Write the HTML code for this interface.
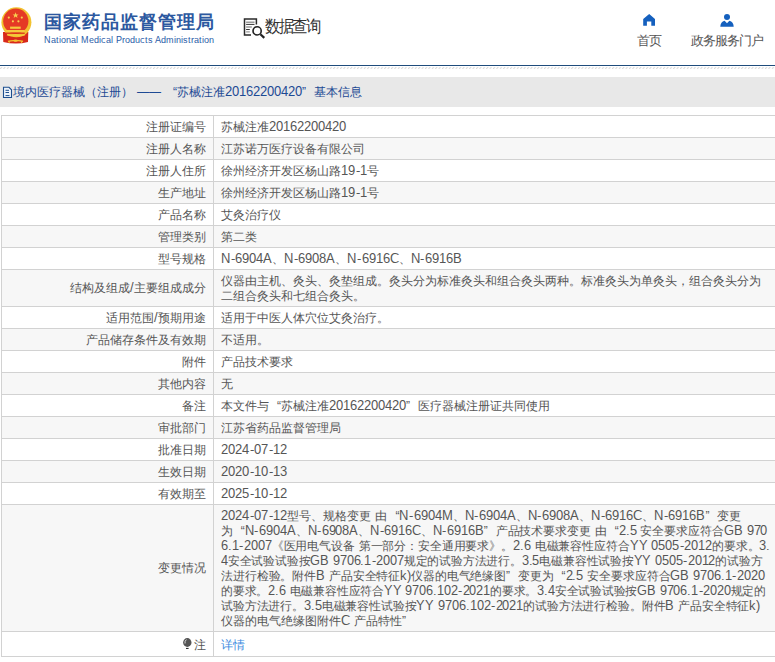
<!DOCTYPE html>
<html><head><meta charset="utf-8">
<style>
@font-face{font-family:"Liberation Sans";src:local("Liberation Sans"),local("LiberationSans");size-adjust:108%;unicode-range:U+0020-007E,U+00A0-00FF}
*{margin:0;padding:0;box-sizing:border-box}
html,body{width:775px;height:662px;overflow:hidden;background:#fff;font-family:"Liberation Sans",sans-serif;-webkit-font-smoothing:antialiased}
.abs{position:absolute}
.t1{position:absolute;left:44px;top:8.5px;font-size:18px;letter-spacing:1px;font-weight:bold;color:#2c58a0;white-space:nowrap;line-height:24px}
.t2{position:absolute;left:44px;top:35px;font-size:8.6px;color:#2a5ca8;white-space:nowrap;line-height:11px}
.dqt{position:absolute;left:265px;top:16px;font-size:15px;letter-spacing:-1.3px;transform:scaleY(1.1);transform-origin:0 17px;color:#333;white-space:nowrap;line-height:20px}
.nav{position:absolute;top:32.5px;font-size:13px;letter-spacing:-1px;color:#555;white-space:nowrap;line-height:14px}
.bline{position:absolute;left:0;top:65px;width:775px;height:1px;background:#1f4c7c}
.hatch{position:absolute;left:0;top:67px;width:775px;height:2px}
.band{position:absolute;left:0;top:77px;width:775px;height:30px;background:#e8e8e8}
.bt{position:absolute;left:13px;top:84px;font-size:12px;color:#1d4a94;white-space:nowrap;line-height:16px}
.tbl{position:absolute;left:1px;top:115px;width:800px;border-collapse:collapse;font-size:12px;color:#555}
.tbl td{border:1px solid #d2d2d2;line-height:15px;padding:3px 7px;vertical-align:middle;white-space:nowrap}
.tbl td.l{width:212px;text-align:right}
.tbl tr:nth-child(even) td{background:#f7f7f7}
.qo{display:inline-block;width:12px;text-align:right}
.qc{display:inline-block;width:12px;text-align:left}
.la{letter-spacing:0px}.hy{letter-spacing:0.6px;padding-left:0.6px}
</style></head><body>
<svg class="abs" style="left:0;top:0" width="40" height="50" viewBox="0 0 40 50">
  <path d="M3 32 L28.3 32 L28 42 Q16 45 3.3 42Z" fill="#d8281b"/>
  <circle cx="16.4" cy="22.3" r="15" fill="#f2c230"/>
  <circle cx="15.8" cy="21.2" r="12.6" fill="#e53a25"/>
  <rect x="10.1" y="26.6" width="10.6" height="2.2" fill="#f6c93e"/>
  <rect x="5.7" y="30" width="19" height="2.6" fill="#f6c93e"/>
  <path d="M5.7 33.2 H24.7" stroke="#d8281b" stroke-width="1.2"/>
  <path d="M7 34.6 Q11 36.5 15.5 34.6 Q20 36.5 25 34.6" stroke="#f6c93e" stroke-width="1.3" fill="none"/>
  <polygon points="15.6,12.3 16.4,14.4 18.6,14.4 16.9,15.7 17.5,17.9 15.6,16.6 13.7,17.9 14.3,15.7 12.6,14.4 14.8,14.4" fill="#f7d050"/>
  <circle cx="8.8" cy="17.6" r="1.1" fill="#f7d050"/><circle cx="21.8" cy="17.6" r="1.1" fill="#f7d050"/>
  <circle cx="12.9" cy="21.3" r="1.1" fill="#f7d050"/><circle cx="18.4" cy="21.3" r="1.1" fill="#f7d050"/>
  <path d="M8 41.5 Q12 40.2 15.6 40.8 Q19.5 40.2 23 41.5" stroke="#f2c230" stroke-width="1.4" fill="none"/>
  <ellipse cx="15.6" cy="40.6" rx="2.2" ry="1.2" fill="#f2c230"/>
  <path d="M9.2 41.5 V43 M21.5 41.5 V43" stroke="#f2c230" stroke-width="0.9"/>
</svg>
<div class="t1">国家药品监督管理局</div>
<div class="t2">National Medical Products Administration</div>
<svg class="abs" style="left:243px;top:17px" width="24" height="23" viewBox="0 0 24 23">
  <path d="M1.5 8 V17.9 H8 M1.5 8 V1.9 H13.4 V7.6" stroke="#2a2a2a" stroke-width="1.5" fill="none"/>
  <path d="M3.1 5.2h8.4M3.1 10h5.7M3.1 14.9h3.7" stroke="#9a9a9a" stroke-width="1.4"/>
  <path d="M3.1 7.4h8.4M3.1 12.5h3.7" stroke="#333" stroke-width="1"/>
  <circle cx="14.1" cy="13.9" r="4.1" stroke="#222" stroke-width="1.6" fill="#fff"/>
  <path d="M17.4 17.3 L21.3 20.9" stroke="#222" stroke-width="2.2"/>
</svg>
<div class="dqt">数据查询</div>
<svg class="abs" style="left:642px;top:14px" width="14" height="12" viewBox="0 0 14 12">
  <path d="M7.2 0 L13 5.1 L13 11.8 L9.3 11.8 L9.3 7.6 L4.9 7.6 L4.9 11.8 L1.2 11.8 L1.2 5.1Z" fill="#1560be"/>
</svg>
<div class="nav" style="left:637px">首页</div>
<svg class="abs" style="left:720px;top:14px" width="14" height="13" viewBox="0 0 14 13">
  <circle cx="7" cy="3.1" r="3" fill="#1560be"/>
  <path d="M0.3 12.8 Q0.5 7.6 4.6 6.8 L7 9.2 L9.4 6.8 Q13.5 7.6 13.7 12.8Z" fill="#1560be"/>
</svg>
<div class="nav" style="left:691px">政务服务门户</div>
<div class="bline"></div>
<svg class="hatch" width="775" height="2"><defs><pattern id="h" width="3.4" height="2" patternUnits="userSpaceOnUse"><path d="M0 2 L2 0" stroke="#d6d6d6" stroke-width="1"/></pattern></defs><rect width="775" height="2" fill="url(#h)"/></svg>
<div class="band"></div>
<svg class="abs" style="left:2px;top:86px" width="11" height="13" viewBox="0 0 11 13">
  <path d="M1.5 1.3 H7 L9.5 3.8 V11.5 H1.5Z" stroke="#1e4f8f" stroke-width="1.1" fill="#eef4fb"/>
  <path d="M3.5 4.3h3.5M3.5 6.5h3.5M3.5 9.6h4" stroke="#1e4f8f" stroke-width="1"/>
</svg>
<div class="bt">境内医疗器械（注册） —— <span class="qo">“</span>苏械注准20162200420<span class="qc">”</span>基本信息</div>
<table class="tbl">
<tr><td class="l">注册证编号</td><td><span id="V0">苏械注准<span class="la">20162200420</span></span></td></tr>
<tr><td class="l">注册人名称</td><td><span id="V1">江苏诺万医疗设备有限公司</span></td></tr>
<tr><td class="l">注册人住所</td><td><span id="V2">徐州经济开发区杨山路<span class="la">19<span class="hy">-</span>1</span>号</span></td></tr>
<tr><td class="l">生产地址</td><td><span id="V3">徐州经济开发区杨山路<span class="la">19<span class="hy">-</span>1</span>号</span></td></tr>
<tr><td class="l">产品名称</td><td><span id="V4">艾灸治疗仪</span></td></tr>
<tr><td class="l">管理类别</td><td><span id="V5">第二类</span></td></tr>
<tr><td class="l">型号规格</td><td><span id="V6"><span class="la">N<span class="hy">-</span>6904A</span>、<span class="la">N<span class="hy">-</span>6908A</span>、<span class="la">N<span class="hy">-</span>6916C</span>、<span class="la">N<span class="hy">-</span>6916B</span></span></td></tr>
<tr><td class="l"><span style="position:relative;top:-1px">结构及组成/主要组成成分</span></td><td><span id="L7_0" style="display:inline-block;transform-origin:0 0;transform:scaleX(1.0000)">仪器由主机、灸头、灸垫组成。灸头分为标准灸头和组合灸头两种。标准灸头为单灸头，组合灸头分为</span><br><span id="L7_1" style="display:inline-block;transform-origin:0 0;transform:scaleX(1.0000)">二组合灸头和七组合灸头。</span></td></tr>
<tr><td class="l">适用范围/预期用途</td><td><span id="V8">适用于中医人体穴位艾灸治疗。</span></td></tr>
<tr><td class="l">产品储存条件及有效期</td><td><span id="V9">不适用。</span></td></tr>
<tr><td class="l">附件</td><td><span id="V10">产品技术要求</span></td></tr>
<tr><td class="l">其他内容</td><td><span id="V11">无</span></td></tr>
<tr><td class="l">备注</td><td><span id="V12">本文件与<span class="qo">“</span>苏械注准<span class="la">20162200420</span><span class="qc">”</span>医疗器械注册证共同使用</span></td></tr>
<tr><td class="l">审批部门</td><td><span id="V13">江苏省药品监督管理局</span></td></tr>
<tr><td class="l">批准日期</td><td><span id="V14"><span class="la">2024<span class="hy">-</span>07<span class="hy">-</span>12</span></span></td></tr>
<tr><td class="l">生效日期</td><td><span id="V15"><span class="la">2020<span class="hy">-</span>10<span class="hy">-</span>13</span></span></td></tr>
<tr><td class="l">有效期至</td><td><span id="V16"><span class="la">2025<span class="hy">-</span>10<span class="hy">-</span>12</span></span></td></tr>
<tr><td class="l"><span style="position:relative;top:-1px">变更情况</span></td><td><span id="L17_0" style="display:inline-block;transform-origin:0 0;transform:scaleX(1.0000)"><span class="la">2024<span class="hy">-</span>07<span class="hy">-</span>12</span>型号、规格变更 由<span class="qo">“</span><span class="la">N<span class="hy">-</span>6904M</span>、<span class="la">N<span class="hy">-</span>6904A</span>、<span class="la">N<span class="hy">-</span>6908A</span>、<span class="la">N<span class="hy">-</span>6916C</span>、<span class="la">N<span class="hy">-</span>6916B</span><span class="qc">”</span>变更</span><br><span id="L17_1" style="display:inline-block;transform-origin:0 0;transform:scaleX(0.9920)">为<span class="qo">“</span><span class="la">N<span class="hy">-</span>6904A</span>、<span class="la">N<span class="hy">-</span>6908A</span>、<span class="la">N<span class="hy">-</span>6916C</span>、<span class="la">N<span class="hy">-</span>6916B</span><span class="qc">”</span>产品技术要求变更 由<span class="qo">“</span><span class="la">2.5</span> 安全要求应符合<span class="la">GB 970</span></span><br><span id="L17_2" style="display:inline-block;transform-origin:0 0;transform:scaleX(0.9890)"><span class="la">6.1<span class="hy">-</span>2007</span>《医用电气设备 第一部分：安全通用要求》。<span class="la">2.6</span> 电磁兼容性应符合<span class="la">YY 0505<span class="hy">-</span>2012</span>的要求。<span class="la">3.</span></span><br><span id="L17_3" style="display:inline-block;transform-origin:0 0;transform:scaleX(0.9820)"><span class="la">4</span>安全试验试验按<span class="la">GB 9706.1<span class="hy">-</span>2007</span>规定的试验方法进行。<span class="la">3.5</span>电磁兼容性试验按<span class="la">YY 0505<span class="hy">-</span>2012</span>的试验方</span><br><span id="L17_4" style="display:inline-block;transform-origin:0 0;transform:scaleX(0.9900)">法进行检验。附件<span class="la">B</span> 产品安全特征<span class="la">k)</span>仪器的电气绝缘图<span class="qc">”</span>变更为<span class="qo">“</span><span class="la">2.5</span> 安全要求应符合<span class="la">GB 9706.1<span class="hy">-</span>2020</span></span><br><span id="L17_5" style="display:inline-block;transform-origin:0 0;transform:scaleX(0.9810)">的要求。<span class="la">2.6</span> 电磁兼容性应符合<span class="la">YY 9706.102<span class="hy">-</span>2021</span>的要求。<span class="la">3.4</span>安全试验试验按<span class="la">GB 9706.1<span class="hy">-</span>2020</span>规定的</span><br><span id="L17_6" style="display:inline-block;transform-origin:0 0;transform:scaleX(0.9870)">试验方法进行。<span class="la">3.5</span>电磁兼容性试验按<span class="la">YY 9706.102<span class="hy">-</span>2021</span>的试验方法进行检验。附件<span class="la">B</span> 产品安全特征<span class="la">k)</span></span><br><span id="L17_7" style="display:inline-block;transform-origin:0 0;transform:scaleX(1.0000)">仪器的电气绝缘图附件<span class="la">C</span> 产品特性<span class="qc">”</span></span></td></tr>
<tr style="height:25px"><td class="l"><svg style="vertical-align:-1px;margin-right:2px" width="9" height="12" viewBox="0 0 9 12"><ellipse cx="4.3" cy="4.5" rx="4.2" ry="4.4" fill="#555"/><path d="M2 5.5 Q1.6 3 3.4 1.6" stroke="#ddd" stroke-width="1" fill="none"/><rect x="3" y="9.9" width="2.6" height="1.1" fill="#333"/></svg>注</td><td style="color:#3b8be0">详情</td></tr>
</table>
</body></html>
